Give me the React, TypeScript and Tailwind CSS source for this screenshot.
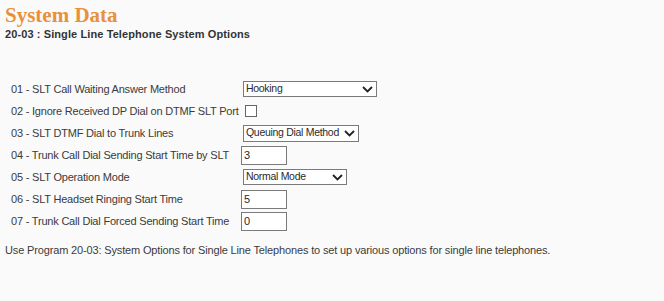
import React from 'react';

const Chevron = () => (
  <svg width="11" height="7" viewBox="0 0 11 7" className="shrink-0">
    <path d="M1 1l4.5 4.5L10 1" fill="none" stroke="#222" strokeWidth="1.8" />
  </svg>
);

const Select: React.FC<{ value: string; width: string; height: string }> = ({ value, width, height }) => (
  <div className={`${width} ${height} ml-[2px] flex items-center justify-between border border-[#7a7a7a] bg-white pl-[2px] pr-[3px]`}>
    <span className="text-[#2a2a2a] text-[10.5px] whitespace-nowrap tracking-[-0.3px]">{value}</span>
    <Chevron />
  </div>
);

const TextBox: React.FC<{ value: string }> = ({ value }) => (
  <div className="w-[46px] h-[19px] flex items-center border border-[#7a7a7a] bg-white pl-[2px] text-[#2a2a2a]">
    {value}
  </div>
);

const rows: { label: string; control: React.ReactNode }[] = [
  { label: '01 - SLT Call Waiting Answer Method', control: <Select value="Hooking" width="w-[134px]" height="h-[16px]" /> },
  {
    label: '02 - Ignore Received DP Dial on DTMF SLT Port',
    control: <div className="ml-[4px] w-[12px] h-[12px] border border-[#666] bg-white" />,
  },
  { label: '03 - SLT DTMF Dial to Trunk Lines', control: <Select value="Queuing Dial Method" width="w-[116px]" height="h-[17px]" /> },
  { label: '04 - Trunk Call Dial Sending Start Time by SLT', control: <TextBox value="3" /> },
  { label: '05 - SLT Operation Mode', control: <Select value="Normal Mode" width="w-[104px]" height="h-[16px]" /> },
  { label: '06 - SLT Headset Ringing Start Time', control: <TextBox value="5" /> },
  { label: '07 - Trunk Call Dial Forced Sending Start Time', control: <TextBox value="0" /> },
];

export default function App() {
  return (
    <div className="w-[664px] h-[301px] bg-[#fafafa] text-[11px] text-[#3a3a3a] font-['Liberation_Sans',sans-serif] px-[5px] pt-[3px]">
      <h1 className="font-['Liberation_Serif',serif] font-bold text-[21px] leading-[24px] text-[#e8913a]">System Data</h1>
      <h2 className="font-bold text-[#333] leading-[14px] tracking-[0.1px]">20-03 : Single Line Telephone System Options</h2>
      <div className="mt-[37px] pl-[6px]">
        {rows.map((r) => (
          <div key={r.label} className="h-[22px] flex items-center">
            <span className="w-[230px] shrink-0 whitespace-nowrap tracking-[-0.2px]">{r.label}</span>
            {r.control}
          </div>
        ))}
      </div>
      <p className="mt-[10px] tracking-[-0.15px]">
        Use Program 20-03: System Options for Single Line Telephones to set up various options for single line telephones.
      </p>
    </div>
  );
}
